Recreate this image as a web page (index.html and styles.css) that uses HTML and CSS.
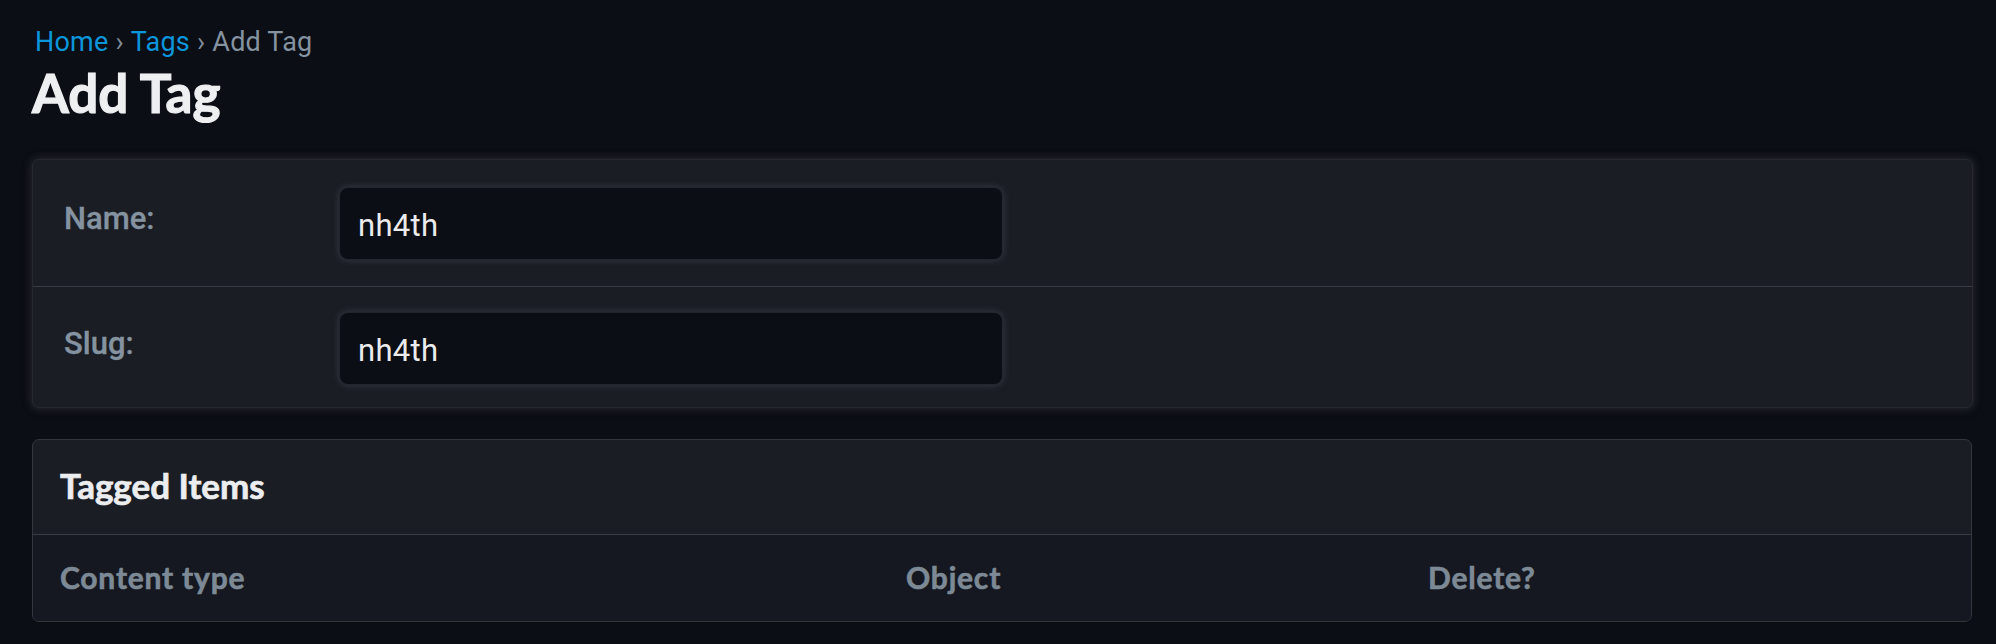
FILE: index.html
```html
<!DOCTYPE html>
<html lang="en">
<head>
<meta charset="utf-8">
<title>Add Tag</title>
<link rel="stylesheet" href="styles.css">
</head>
<body>
<div class="page">
  <nav class="crumbs"><a class="crumb-link">Home</a><span class="sep">›</span><a class="crumb-link">Tags</a><span class="sep">›</span><span class="crumb-current">Add Tag</span></nav>
  <h1 class="title">Add Tag</h1>

  <div class="card form-card">
    <div class="form-row">
      <label class="field-label">Name:</label>
      <div class="field-input">nh4th</div>
    </div>
    <div class="form-row">
      <label class="field-label">Slug:</label>
      <div class="field-input">nh4th</div>
    </div>
  </div>

  <div class="card inline-card">
    <div class="inline-head">Tagged Items</div>
    <div class="inline-cols">
      <div class="col col-type">Content type</div>
      <div class="col col-object">Object</div>
      <div class="col col-delete">Delete?</div>
    </div>
  </div>
</div>
</body>
</html>
```

FILE: styles.css
```css
html, body {
  margin: 0;
  padding: 0;
  background: #0b0e14;
}

body {
  font-family: Roboto, "Liberation Sans", sans-serif;
  color: #e8e9eb;
}

.page {
  padding: 26px 23px 0 32px;
}

.crumbs {
  font-size: 27px;
  line-height: 32px;
  letter-spacing: 0.2px;
  color: #7f8c98;
  padding-left: 3px;
}

.crumb-link {
  color: #0b96dc;
}

.sep {
  color: #7f8c98;
  margin: 0 7px;
}

.crumb-current {
  color: #8593a0;
}

.title {
  margin: 5px 0 0 0;
  font-family: Lato, "Open Sans", sans-serif;
  font-weight: 700;
  font-size: 53px;
  line-height: 60px;
  color: #eeeff1;
  -webkit-text-stroke: 1.2px #eeeff1;
}

.card {
  border-radius: 7px;
  background: #1a1d24;
}

.form-card {
  margin-top: 36px;
  border: 1px solid #262930;
  box-shadow: 0 0 7px 2px rgba(52, 55, 62, 0.55);
}

.form-row {
  display: flex;
  align-items: flex-start;
  padding: 26px 31px 23px 31px;
}

.form-row:first-child {
  padding-top: 28px;
  padding-bottom: 27px;
  border-bottom: 1px solid #3a3d45;
}

.field-label {
  width: 276px;
  flex: none;
  margin-top: 11px;
  font-size: 31px;
  line-height: 40px;
  font-weight: 500;
  color: #8593a0;
  -webkit-text-stroke: 0.3px #8593a0;
}

.field-input {
  box-sizing: border-box;
  width: 662px;
  height: 71px;
  padding: 3px 18px 0 18px;
  display: flex;
  align-items: center;
  background: #0b0e14;
  border-radius: 8px;
  font-size: 31px;
  letter-spacing: 0.3px;
  color: #ebebed;
  box-shadow: 0 0 0 1px #23262d, 0 0 6px 2px rgba(78, 82, 92, 0.45);
}

.inline-card {
  margin-top: 31px;
  margin-right: 1px;
  border: 1px solid #33363d;
  overflow: hidden;
}

.inline-head {
  padding: 24px 27px 28px 27px;
  font-family: Lato, "Open Sans", sans-serif;
  font-weight: 700;
  font-size: 35px;
  line-height: 42px;
  color: #ecedef;
  -webkit-text-stroke: 0.7px #ecedef;
  border-bottom: 1px solid #3a3d45;
}

.inline-cols {
  display: grid;
  grid-template-columns: 846px 522px 1fr;
  background: #151820;
  padding: 24px 0 26px 0;
}

.col {
  padding-left: 27px;
  font-family: Lato, "Open Sans", sans-serif;
  font-weight: 700;
  font-size: 30px;
  line-height: 36px;
  letter-spacing: 0.8px;
  color: #7d8a96;
  -webkit-text-stroke: 0.6px #7d8a96;
}
```
